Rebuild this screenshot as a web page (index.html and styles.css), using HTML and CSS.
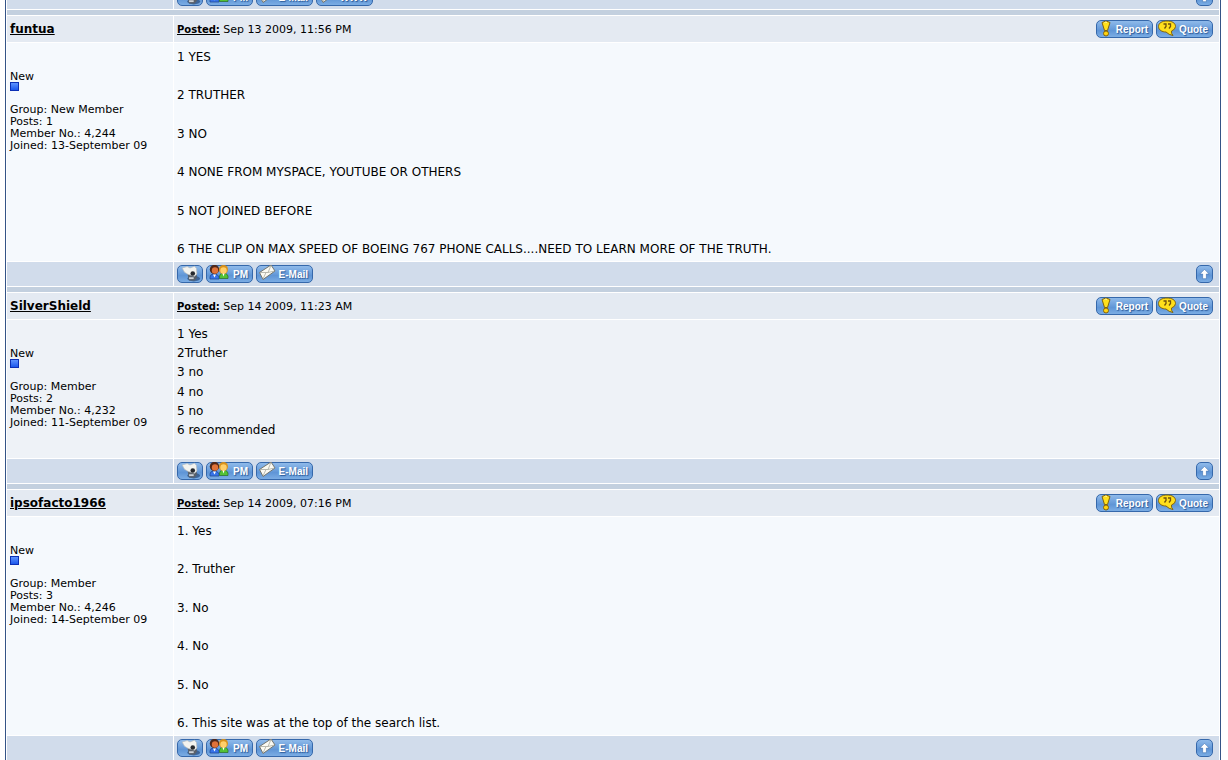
FILE: index.html
```
<!DOCTYPE html>
<html lang="en">
<head>
    <meta charset="UTF-8">
    <meta name="viewport" content="width=device-width, initial-scale=1.0">
    <title>Forum topic</title>
    <link rel="stylesheet" href="styles.css">
</head>
<body>
    <!-- shared icons -->
    <svg class="sprite" aria-hidden="true">
        <symbol id="icon-report" viewBox="0 0 16 18">
            <path d="M5 2.500Q9 -.5 13 2.500L10.500 10.500H7.500Z" fill="#ffe01c" stroke="#80620f"/>
            <path d="M7.500 2.500Q9 1.500 10 2.500" fill="none" stroke="#fff9b0"/>
            <circle cx="9" cy="13.500" r="2.500" fill="#ffd30f" stroke="#80620f"/>
        </symbol>
        <symbol id="icon-quote" viewBox="0 0 20 18">
            <path d="M10 1C5 1 1.500 3 1.500 6.500S5 12 9 12Q12 15 16 15.500Q14 13.500 14.500 11Q18.500 9.500 18.500 6.500C18.500 3 15 1 10 1Z" fill="#ffdf1c" stroke="#80620f"/>
            <path d="M6.500 4h2.500v2.500l-1.500 2M11 4h2.500v2.500l-1.500 2" fill="none" stroke="#70520c" stroke-width="1.300"/>
        </symbol>
        <symbol id="icon-profile" viewBox="0 0 26 18">
            <ellipse cx="17" cy="14" rx="7" ry="3" fill="#1d3c69" opacity=".6"/>
            <path d="M10 8L20 8L20.500 13L18 16H12Z" fill="#59616b"/>
            <path d="M4.500 2.500L10 1L13 2.500L18 .5L20 3L20.500 9L18 11.500L11 9.500L7 7Z" fill="#f3f3ef" stroke="#b4b9bc" stroke-width=".7"/>
            <circle cx="16" cy="8.500" r="2.500" fill="#26292e"/>
            <path d="M12 13.500h5" stroke="#cdd2d7" stroke-width="2"/>
        </symbol>
        <symbol id="icon-pm" viewBox="0 0 22 18">
            <path d="M3 14V12Q3 9 7 9T12 12V14Z" fill="#3874e8" stroke="#1c458f" stroke-width=".7"/>
            <path d="M12.500 13.500V11Q13 8 16.500 8T21 11V13.500Z" fill="#53c135" stroke="#286d27" stroke-width=".7"/>
            <circle cx="7.500" cy="4.500" r="4.700" fill="#512819"/>
            <circle cx="8" cy="5.500" r="3.200" fill="#e0723a"/>
            <circle cx="16.500" cy="4.500" r="4.500" fill="#d9911b"/>
            <circle cx="16.500" cy="5.500" r="3.200" fill="#ffcf6a"/>
            <path d="M6 9.500l1.500 3 1.500-3M15.500 8.500l1 3 1-3" fill="#fff"/>
        </symbol>
        <symbol id="icon-mail" viewBox="0 0 20 18">
            <path d="M2.500 7.500L14 0L18 6L6 14.500Z" fill="#fbfaf2" stroke="#72756f"/>
            <path d="M3 7.500L11 7.500L14 .5M6 14L9 7.500M17.500 6L11 7.500" fill="none" stroke="#aaa99e" stroke-width=".8"/>
        </symbol>
        <symbol id="icon-up" viewBox="0 0 16 16">
            <path d="M8 2.500L13 7.500H10V12.500H6V7.500H3Z" fill="#fff" stroke="#3569ac" stroke-width=".6"/>
        </symbol>
    </svg>

    <main class="topic">
        <table class="posts">
            <colgroup>
                <col class="col-member">
                <col>
            </colgroup>
            <tbody>
                <tr class="post-foot">
                    <td></td>
                    <td>
                        <div class="bar clipped">
                            <div class="buttons">
                                <button class="btn btn-profile" aria-label="Profile"><svg><use href="#icon-profile"/></svg></button>
                                <button class="btn btn-pm"><svg><use href="#icon-pm"/></svg>PM</button>
                                <button class="btn btn-mail"><svg><use href="#icon-mail"/></svg>E-Mail</button>
                                <button class="btn btn-www"><svg><use href="#icon-mail"/></svg>WWW</button>
                            </div>
                            <a class="btn btn-up" href="#" aria-label="Top"><svg><use href="#icon-up"/></svg></a>
                        </div>
                    </td>
                </tr>
                <tr class="separator"><td colspan="2"></td></tr>
            </tbody>

            <tbody>
                <tr class="post-head">
                    <td><a class="member" href="#">funtua</a></td>
                    <td>
                        <div class="bar">
                            <span class="date"><a href="#">Posted:</a> Sep 13 2009, 11:56 PM</span>
                            <div class="buttons">
                                <button class="btn btn-report"><svg><use href="#icon-report"/></svg>Report</button>
                                <button class="btn btn-quote"><svg><use href="#icon-quote"/></svg>Quote</button>
                            </div>
                        </div>
                    </td>
                </tr>
                <tr class="post-body">
                    <td class="details">
                        New
                        <div class="pip"></div>
                        Group: New Member<br>
                        Posts: 1<br>
                        Member No.: 4,244<br>
                        Joined: 13-September 09
                    </td>
                    <td class="message">
                        1 YES<br><br>
                        2 TRUTHER<br><br>
                        3 NO<br><br>
                        4 NONE FROM MYSPACE, YOUTUBE OR OTHERS<br><br>
                        5 NOT JOINED BEFORE<br><br>
                        6 THE CLIP ON MAX SPEED OF BOEING 767 PHONE CALLS....NEED TO LEARN MORE OF THE TRUTH.
                    </td>
                </tr>
                <tr class="post-foot">
                    <td></td>
                    <td>
                        <div class="bar">
                            <div class="buttons">
                                <button class="btn btn-profile" aria-label="Profile"><svg><use href="#icon-profile"/></svg></button>
                                <button class="btn btn-pm"><svg><use href="#icon-pm"/></svg>PM</button>
                                <button class="btn btn-mail"><svg><use href="#icon-mail"/></svg>E-Mail</button>
                            </div>
                            <a class="btn btn-up" href="#" aria-label="Top"><svg><use href="#icon-up"/></svg></a>
                        </div>
                    </td>
                </tr>
                <tr class="separator"><td colspan="2"></td></tr>
            </tbody>

            <tbody class="alt">
                <tr class="post-head">
                    <td><a class="member" href="#">SilverShield</a></td>
                    <td>
                        <div class="bar">
                            <span class="date"><a href="#">Posted:</a> Sep 14 2009, 11:23 AM</span>
                            <div class="buttons">
                                <button class="btn btn-report"><svg><use href="#icon-report"/></svg>Report</button>
                                <button class="btn btn-quote"><svg><use href="#icon-quote"/></svg>Quote</button>
                            </div>
                        </div>
                    </td>
                </tr>
                <tr class="post-body">
                    <td class="details">
                        New
                        <div class="pip"></div>
                        Group: Member<br>
                        Posts: 2<br>
                        Member No.: 4,232<br>
                        Joined: 11-September 09
                    </td>
                    <td class="message">
                        1 Yes<br>
                        2Truther<br>
                        3 no<br>
                        4 no<br>
                        5 no<br>
                        6 recommended
                    </td>
                </tr>
                <tr class="post-foot">
                    <td></td>
                    <td>
                        <div class="bar">
                            <div class="buttons">
                                <button class="btn btn-profile" aria-label="Profile"><svg><use href="#icon-profile"/></svg></button>
                                <button class="btn btn-pm"><svg><use href="#icon-pm"/></svg>PM</button>
                                <button class="btn btn-mail"><svg><use href="#icon-mail"/></svg>E-Mail</button>
                            </div>
                            <a class="btn btn-up" href="#" aria-label="Top"><svg><use href="#icon-up"/></svg></a>
                        </div>
                    </td>
                </tr>
                <tr class="separator"><td colspan="2"></td></tr>
            </tbody>

            <tbody>
                <tr class="post-head">
                    <td><a class="member" href="#">ipsofacto1966</a></td>
                    <td>
                        <div class="bar">
                            <span class="date"><a href="#">Posted:</a> Sep 14 2009, 07:16 PM</span>
                            <div class="buttons">
                                <button class="btn btn-report"><svg><use href="#icon-report"/></svg>Report</button>
                                <button class="btn btn-quote"><svg><use href="#icon-quote"/></svg>Quote</button>
                            </div>
                        </div>
                    </td>
                </tr>
                <tr class="post-body">
                    <td class="details">
                        New
                        <div class="pip"></div>
                        Group: Member<br>
                        Posts: 3<br>
                        Member No.: 4,246<br>
                        Joined: 14-September 09
                    </td>
                    <td class="message">
                        1. Yes<br><br>
                        2. Truther<br><br>
                        3. No<br><br>
                        4. No<br><br>
                        5. No<br><br>
                        6. This site was at the top of the search list.
                    </td>
                </tr>
                <tr class="post-foot">
                    <td></td>
                    <td>
                        <div class="bar">
                            <div class="buttons">
                                <button class="btn btn-profile" aria-label="Profile"><svg><use href="#icon-profile"/></svg></button>
                                <button class="btn btn-pm"><svg><use href="#icon-pm"/></svg>PM</button>
                                <button class="btn btn-mail"><svg><use href="#icon-mail"/></svg>E-Mail</button>
                            </div>
                            <a class="btn btn-up" href="#" aria-label="Top"><svg><use href="#icon-up"/></svg></a>
                        </div>
                    </td>
                </tr>
            </tbody>
        </table>
    </main>
</body>
</html>
```
FILE: styles.css
```
body {
    font-family: Verdana, "DejaVu Sans", sans-serif;
    font-size: 11px;
    line-height: 12px;
    color: #000;
    background-color: #fff;
    margin: 0;
}
.sprite {
    display: none;
}
.topic {
    margin: 0 7px 0 5px;
    border: 1px solid #345487;
    border-width: 0 1px;
}
.posts {
    width: 100%;
    table-layout: fixed;
    border-collapse: separate;
    border-spacing: 1px;
    margin-top: -1px;
}
.col-member {
    width: 166px;
}
td {
    padding: 0 3px;
}
a {
    color: #000;
}
.post-head td {
    height: 26px;
    background-color: #e4eaf2;
}
.post-body td {
    background-color: #f5f9fd;
    vertical-align: top;
}
.alt .post-body td {
    background-color: #eef2f7;
}
.post-foot td {
    background-color: #d1dceb;
}
.separator td {
    height: 5px;
    padding: 0;
    background-color: #c3d0df;
}
.member {
    font-size: 12px;
    font-weight: bold;
}
.date {
    padding-top: 2px;
}
.date a {
    font-size: 10px;
    font-weight: bold;
}
.post-body .details {
    padding: 28px 3px 29px;
}
.pip {
    box-sizing: border-box;
    width: 9px;
    height: 9px;
    margin: -1px 0 13px;
    border: 1px solid #0c2fb5;
    background: linear-gradient(#5e93ff, #1c58ec);
}
.post-body .message {
    padding: 5px 3px 2px;
    font-size: 12px;
    line-height: 1.6;
}
.bar {
    display: flex;
    align-items: center;
    justify-content: space-between;
    height: 24px;
    padding-right: 3px;
}
.bar.clipped {
    align-items: flex-end;
    height: 9px;
    padding-bottom: 3px;
    box-sizing: border-box;
    overflow: hidden;
}
.buttons {
    display: flex;
    gap: 3px;
}
.btn {
    display: flex;
    align-items: center;
    justify-content: space-between;
    box-sizing: border-box;
    height: 18px;
    padding: 0 4px 0 0;
    border: 1px solid #3568ab;
    border-radius: 5px;
    background: linear-gradient(#8fbaea, #5f95d6 60%, #7badE4);
    color: #fff;
    font: bold 10px "Liberation Sans", Arial, sans-serif;
    text-shadow: 1px 1px 1px #2d5b99;
    cursor: pointer;
}
.btn svg {
    flex: none;
    width: 20px;
    height: 18px;
}
.btn-profile {
    width: 26px;
    padding: 0;
}
.btn-profile svg {
    width: 24px;
}
.btn-pm {
    width: 47px;
}
.btn-pm svg {
    width: 22px;
}
.btn-mail, .btn-www, .btn-report, .btn-quote {
    width: 57px;
}
.btn-report svg {
    width: 16px;
}
.btn-up {
    width: 17px;
    padding: 0;
}
.btn-up svg {
    width: 15px;
    height: 15px;
}
```
